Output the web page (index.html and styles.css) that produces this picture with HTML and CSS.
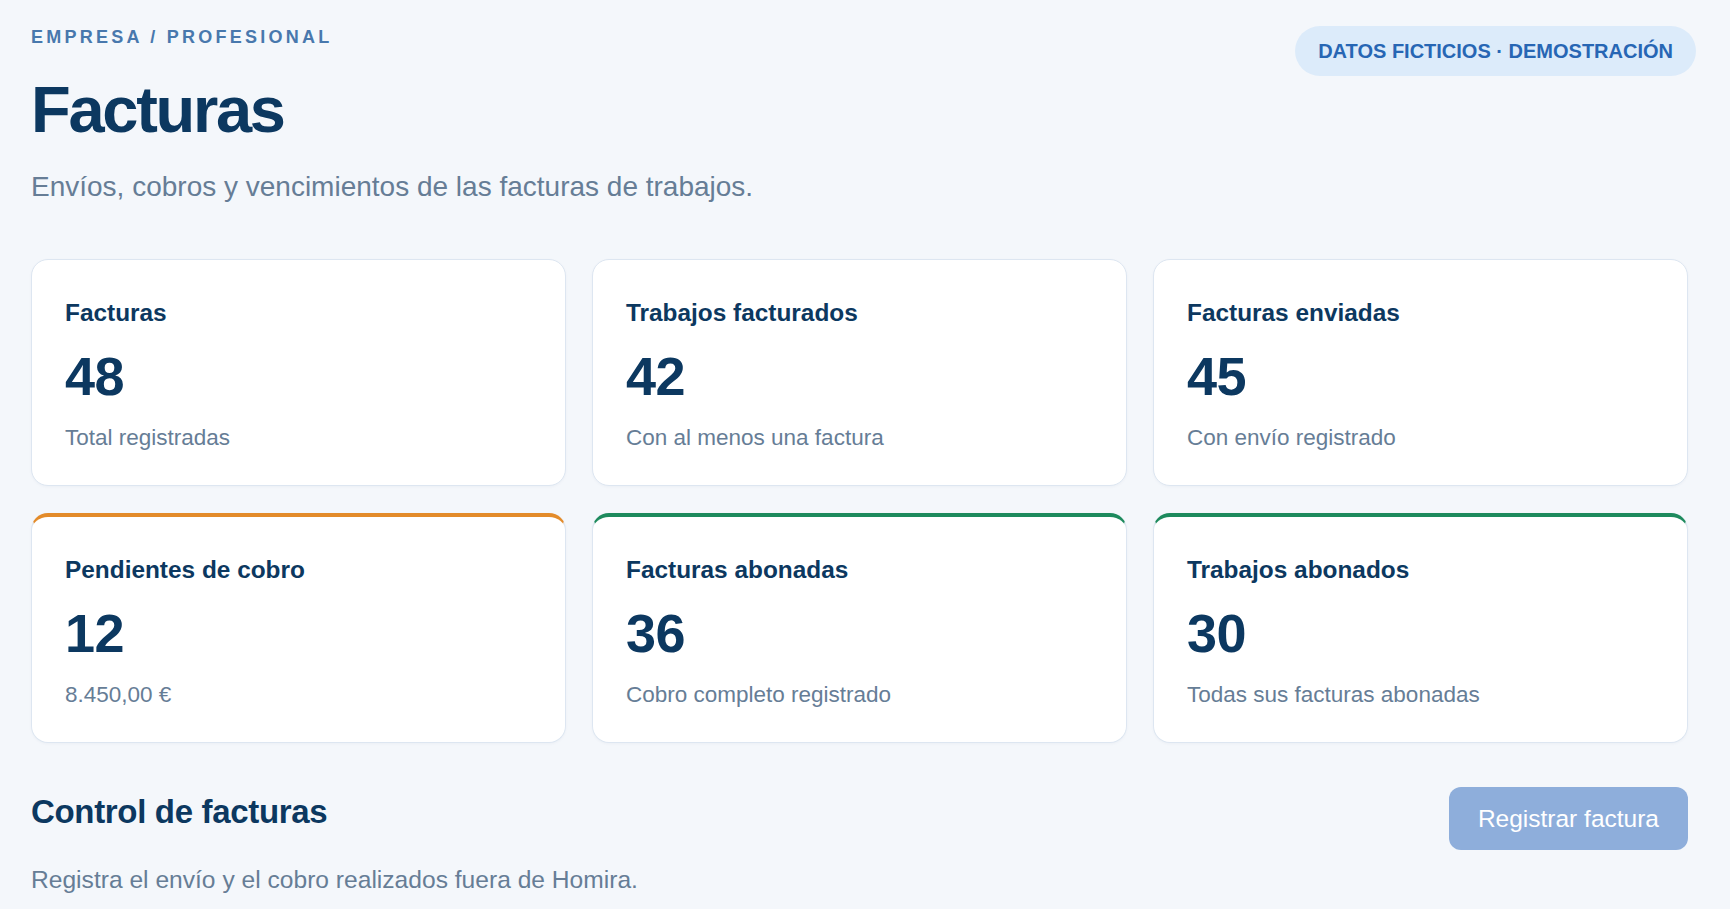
FILE: index.html
```html
<!DOCTYPE html>
<html lang="es">
<head>
<meta charset="UTF-8">
<meta name="viewport" content="width=device-width, initial-scale=1.0">
<title>Facturas</title>
<link rel="stylesheet" href="styles.css">
</head>
<body>

<div class="page">
  <header class="page-head">
    <div>
      <div class="eyebrow">Empresa / Profesional</div>
      <h1 class="title">Facturas</h1>
      <p class="lead">Envíos, cobros y vencimientos de las facturas de trabajos.</p>
    </div>
    <span class="demo-badge">DATOS FICTICIOS · DEMOSTRACIÓN</span>
  </header>

  <section class="stats">
    <div class="stat-card">
      <div class="stat-label">Facturas</div>
      <div class="stat-value">48</div>
      <div class="stat-note">Total registradas</div>
    </div>
    <div class="stat-card">
      <div class="stat-label">Trabajos facturados</div>
      <div class="stat-value">42</div>
      <div class="stat-note">Con al menos una factura</div>
    </div>
    <div class="stat-card">
      <div class="stat-label">Facturas enviadas</div>
      <div class="stat-value">45</div>
      <div class="stat-note">Con envío registrado</div>
    </div>
    <div class="stat-card warn">
      <div class="stat-label">Pendientes de cobro</div>
      <div class="stat-value">12</div>
      <div class="stat-note">8.450,00 €</div>
    </div>
    <div class="stat-card ok">
      <div class="stat-label">Facturas abonadas</div>
      <div class="stat-value">36</div>
      <div class="stat-note">Cobro completo registrado</div>
    </div>
    <div class="stat-card ok">
      <div class="stat-label">Trabajos abonados</div>
      <div class="stat-value">30</div>
      <div class="stat-note">Todas sus facturas abonadas</div>
    </div>
  </section>

  <section class="control">
    <div>
      <h2 class="control-title">Control de facturas</h2>
      <p class="control-text">Registra el envío y el cobro realizados fuera de Homira.</p>
    </div>
    <button class="btn-primary" disabled>Registrar factura</button>
  </section>
</div>

</body>
</html>
```

FILE: styles.css
```css
body, html {
  margin: 0;
  padding: 0;
  background-color: #f4f7fb;
  font-family: 'Liberation Sans', Arial, sans-serif;
  color: #0c3860;
}

.page {
  padding: 27px 42px 0 31px;
}

.page-head {
  display: flex;
  justify-content: space-between;
  align-items: flex-start;
}

.eyebrow {
  font-size: 18px;
  line-height: 1.2;
  font-weight: bold;
  text-transform: uppercase;
  letter-spacing: 0.18em;
  color: #4878ad;
}

.title {
  margin: 25px 0 0;
  font-size: 65px;
  line-height: 1.1;
  font-weight: bold;
  letter-spacing: -0.035em;
  color: #0c3860;
}

.lead {
  margin: 24px 0 0;
  font-size: 28px;
  line-height: 1.3;
  color: #667d96;
}

.demo-badge {
  display: flex;
  align-items: center;
  height: 50px;
  padding: 0 23px;
  margin: -1px -8px 0 0;
  border-radius: 25px;
  background-color: #dcebfa;
  color: #2766b4;
  font-size: 20px;
  font-weight: bold;
  white-space: nowrap;
}

.stats {
  display: grid;
  grid-template-columns: repeat(3, 1fr);
  gap: 27px 26px;
  margin-top: 54px;
}

.stat-card {
  background-color: #ffffff;
  border: 1px solid #dde6f1;
  border-radius: 17px;
  padding: 38px 33px 33px;
  box-shadow: 0 1px 3px rgba(20, 60, 110, 0.04);
}

.stat-card.warn {
  border-top: 4px solid #e38b2a;
}

.stat-card.ok {
  border-top: 4px solid #1d8a5d;
}

.stat-label {
  font-size: 24.4px;
  line-height: 1.2;
  font-weight: bold;
  color: #0c3860;
}

.stat-value {
  margin-top: 19px;
  font-size: 54px;
  line-height: 1.1;
  font-weight: bold;
  letter-spacing: -0.01em;
  color: #0c3860;
}

.stat-note {
  margin-top: 17px;
  font-size: 22.5px;
  line-height: 1.3;
  color: #667d96;
}

.control {
  display: flex;
  justify-content: space-between;
  align-items: flex-start;
  margin-top: 44px;
}

.control-title {
  margin: 4px 0 0;
  font-size: 33px;
  line-height: 1.25;
  font-weight: bold;
  letter-spacing: -0.01em;
  color: #0c3860;
}

.control-text {
  margin: 31px 0 0;
  font-size: 24.6px;
  line-height: 1.3;
  color: #667d96;
}

.btn-primary {
  height: 63px;
  padding: 0 29px;
  border: none;
  border-radius: 12px;
  background-color: #8eaedb;
  color: #ffffff;
  font-family: inherit;
  font-size: 24.5px;
}
```
